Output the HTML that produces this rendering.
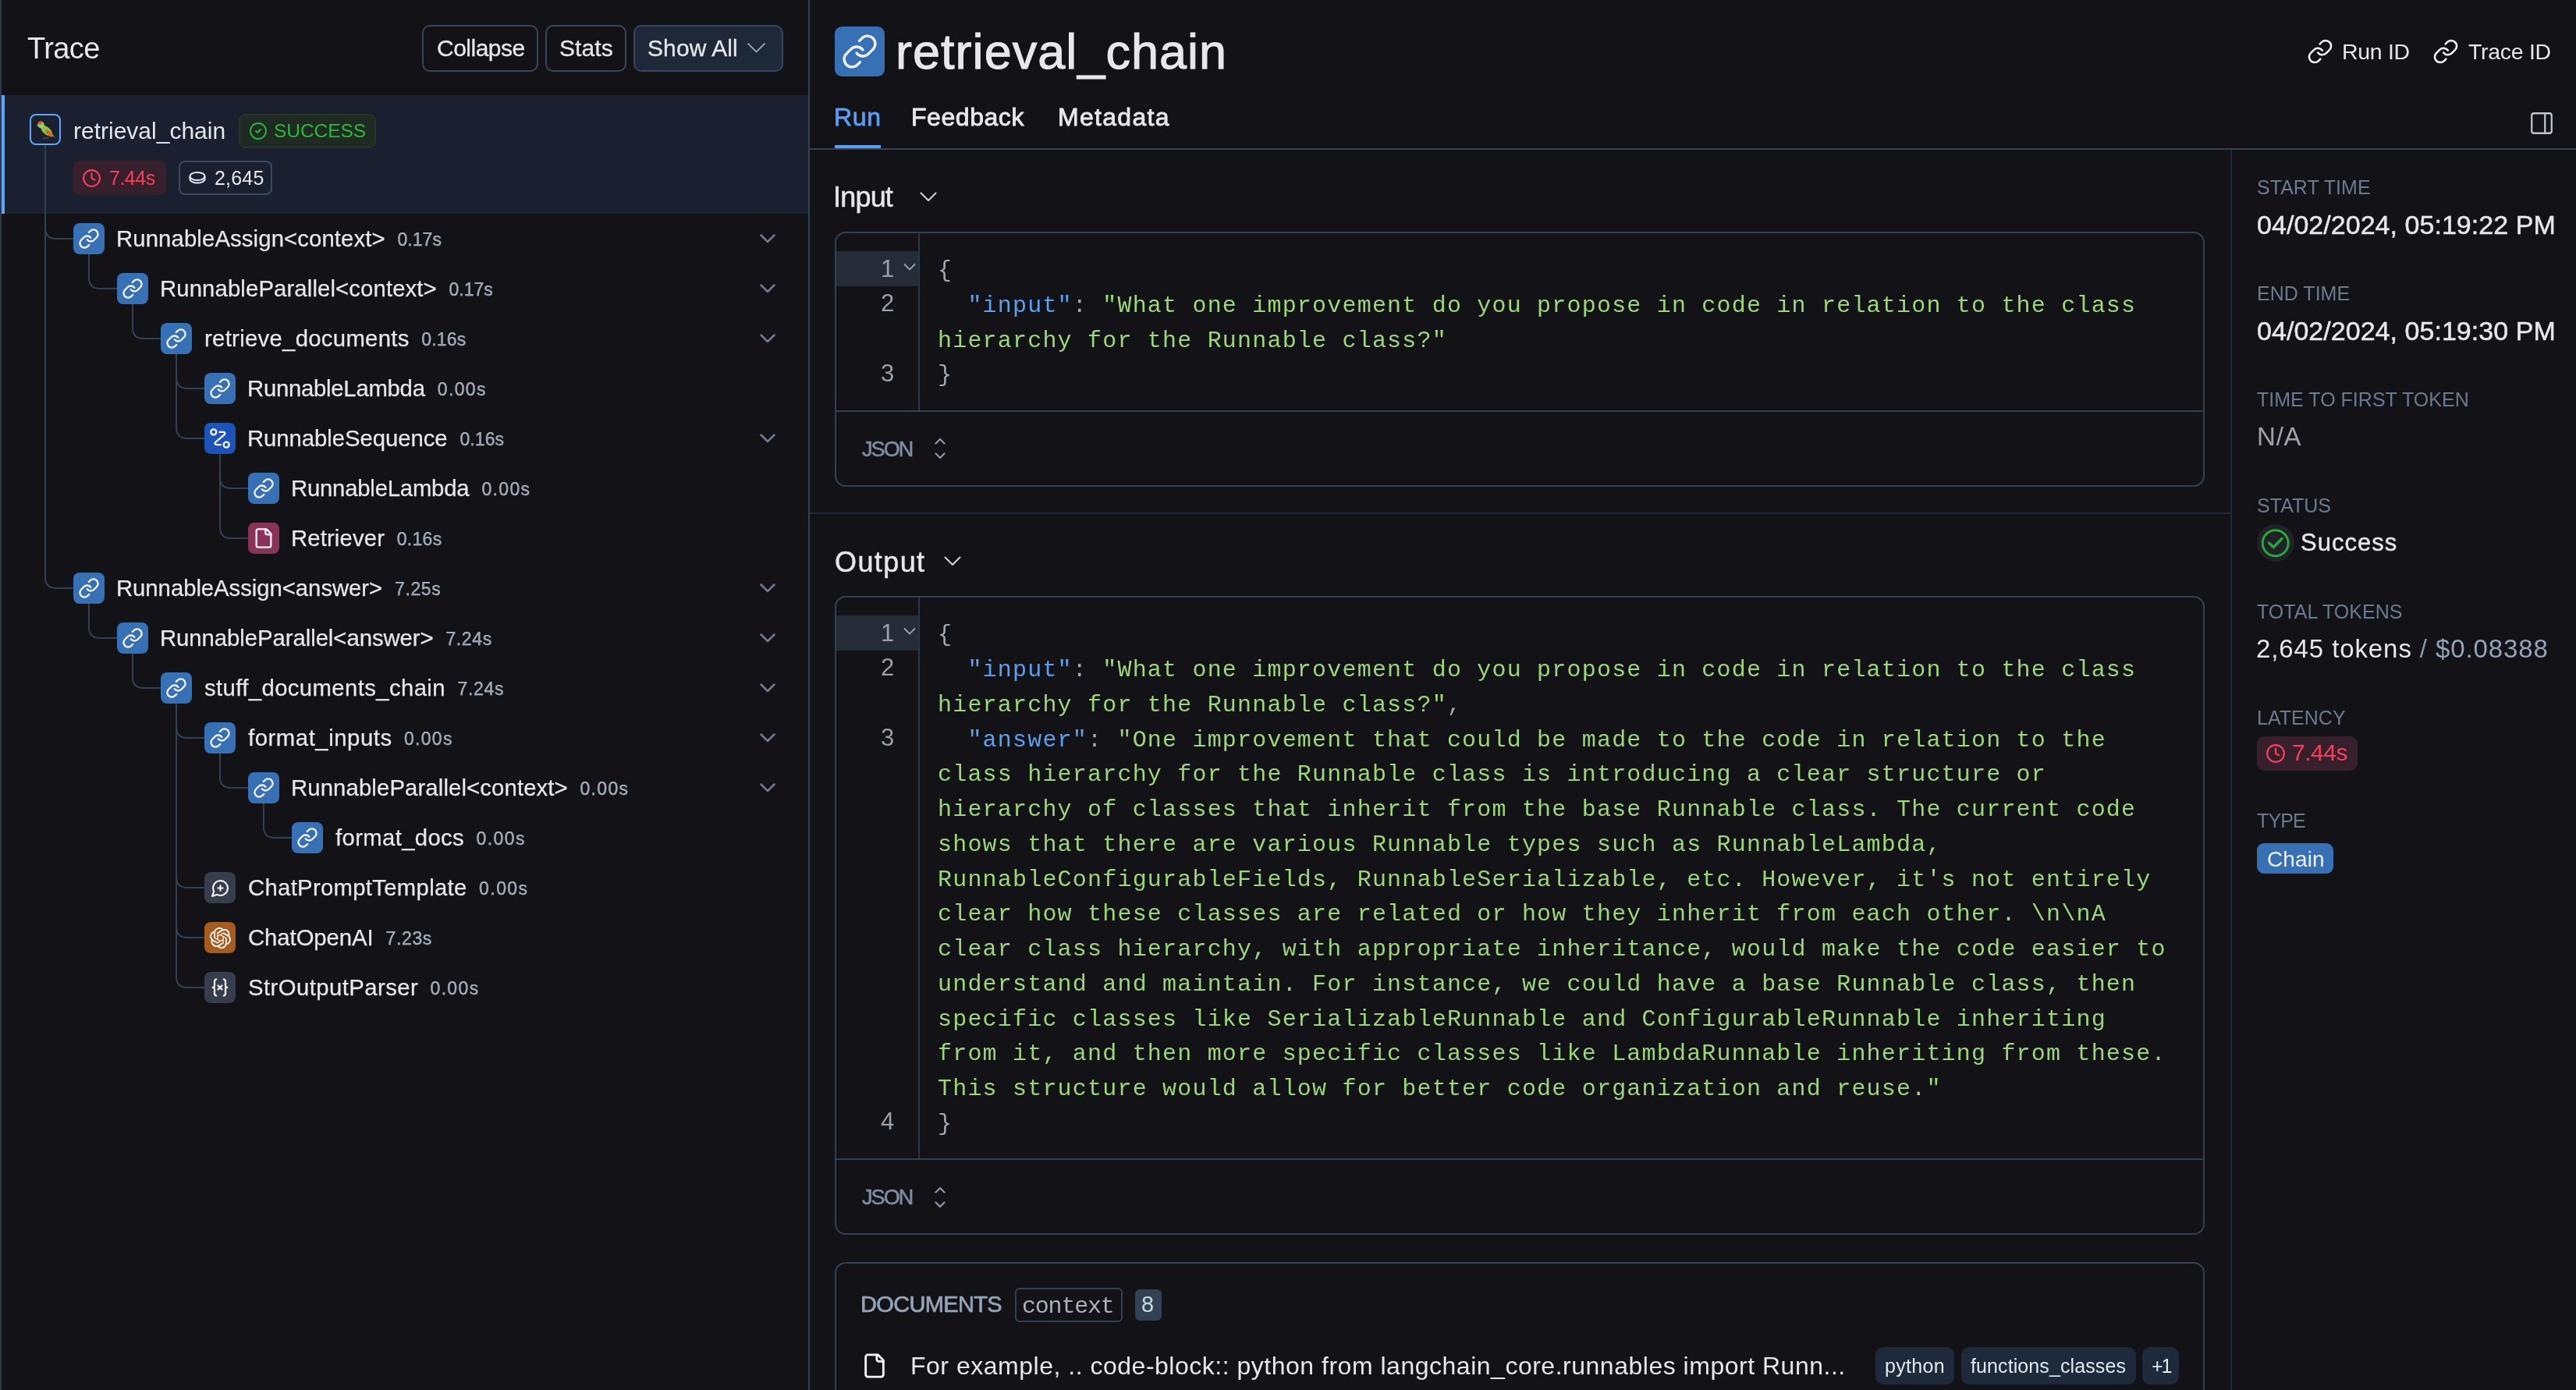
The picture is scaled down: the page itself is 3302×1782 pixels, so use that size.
<!DOCTYPE html><html><head><meta charset="utf-8"><style>
html,body{margin:0;padding:0;}
body{width:3302px;height:1782px;background:#131317;position:relative;overflow:hidden;font-family:'Liberation Sans', sans-serif;}
.t{position:absolute;white-space:pre;will-change:transform;}
.b{position:absolute;}
</style></head><body>
<div class="b" style="left:0px;top:0px;width:2px;height:1782px;background:#2e3a4a;border-radius:0px;box-sizing:border-box;"></div>
<div class="b" style="left:1036px;top:0px;width:2px;height:1782px;background:#334155;border-radius:0px;box-sizing:border-box;"></div>
<div class="t" style="left:35.0px;top:42.7px;font-size:38px;line-height:38px;color:#e6e6eb;font-weight:400;font-family:'Liberation Sans', sans-serif;letter-spacing:-0.6px;">Trace</div>
<div class="b" style="left:541px;top:32px;width:149px;height:60px;background:#131317;border:2px solid #37465c;border-radius:10px;box-sizing:border-box;"></div>
<div class="b" style="left:699px;top:32px;width:104px;height:60px;background:#131317;border:2px solid #37465c;border-radius:10px;box-sizing:border-box;"></div>
<div class="b" style="left:812px;top:32px;width:192px;height:60px;background:#1e2838;border:2px solid #37465c;border-radius:10px;box-sizing:border-box;"></div>
<div class="b" style="left:0px;top:0px;width:0px;height:0px;background:transparent;border-radius:0px;box-sizing:border-box;"></div>
<div class="t" style="left:560.0px;top:47.0px;font-size:30px;line-height:30px;color:#e6e6eb;font-weight:400;font-family:'Liberation Sans', sans-serif;letter-spacing:-0.5px;-webkit-text-stroke:0.3px #e6e6eb;">Collapse</div>
<div class="t" style="left:717.0px;top:47.0px;font-size:30px;line-height:30px;color:#e6e6eb;font-weight:400;font-family:'Liberation Sans', sans-serif;letter-spacing:0.1px;-webkit-text-stroke:0.3px #e6e6eb;">Stats</div>
<div class="t" style="left:830.0px;top:47.0px;font-size:30px;line-height:30px;color:#e6e6eb;font-weight:400;font-family:'Liberation Sans', sans-serif;letter-spacing:0.1px;-webkit-text-stroke:0.3px #e6e6eb;">Show All</div>
<svg class="b" style="left:957px;top:54px;" width="26" height="16" viewBox="0 0 26 16" fill="none" stroke="#a8b8cc" stroke-width="1.7" stroke-linecap="round" stroke-linejoin="round"><path d="M2 2L12.5 12.5L23 2"/></svg>
<div class="b" style="left:2px;top:122px;width:1034px;height:152px;background:#1b2030;border-radius:0px;box-sizing:border-box;"></div>
<div class="b" style="left:2px;top:122px;width:4px;height:152px;background:#60a5fa;border-radius:0px;box-sizing:border-box;"></div>
<svg class="b" style="left:0;top:0" width="1036" height="1782" fill="none" stroke="#334155" stroke-width="2"><path d="M58 186 V292 Q58 306 72 306 H94"/><path d="M114 326 V356 Q114 370 128 370 H150"/><path d="M170 390 V420 Q170 434 184 434 H206"/><path d="M226 454 V484 Q226 498 240 498 H262"/><path d="M226 454 V548 Q226 562 240 562 H262"/><path d="M282 582 V612 Q282 626 296 626 H318"/><path d="M282 582 V676 Q282 690 296 690 H318"/><path d="M58 186 V740 Q58 754 72 754 H94"/><path d="M114 774 V804 Q114 818 128 818 H150"/><path d="M170 838 V868 Q170 882 184 882 H206"/><path d="M226 902 V932 Q226 946 240 946 H262"/><path d="M282 966 V996 Q282 1010 296 1010 H318"/><path d="M338 1030 V1060 Q338 1074 352 1074 H374"/><path d="M226 902 V1124 Q226 1138 240 1138 H262"/><path d="M226 902 V1188 Q226 1202 240 1202 H262"/><path d="M226 902 V1252 Q226 1266 240 1266 H262"/></svg>
<div class="b" style="left:94px;top:286px;width:40px;height:40px;background:#3770b4;border-radius:8px;box-sizing:border-box;"></div>
<svg class="b" style="left:100px;top:292px;" width="28" height="28" viewBox="0 0 24 24" fill="none" stroke="#f5f5f7" stroke-width="2" stroke-linecap="round" stroke-linejoin="round"><path d="M10 13a5 5 0 0 0 7.54.54l3-3a5 5 0 0 0-7.07-7.07l-1.72 1.71"/><path d="M14 11a5 5 0 0 0-7.54-.54l-3 3a5 5 0 0 0 7.07 7.07l1.71-1.71"/></svg>
<div class="t" style="left:148.5px;top:291.1px;font-size:29.3px;line-height:29.3px;color:#e6e6eb;font-weight:400;font-family:'Liberation Sans', sans-serif;letter-spacing:0.12px;-webkit-text-stroke:0.25px #e6e6eb;">RunnableAssign&lt;context&gt;<span style="font-size:23px;color:#94a3b8;letter-spacing:0.05px;margin-left:15.68px;position:relative;top:-1px">0.17s</span></div>
<svg class="b" style="left:972px;top:298px;" width="24" height="16" viewBox="0 0 24 16" fill="none" stroke="#6e7d96" stroke-width="2.5" stroke-linecap="round" stroke-linejoin="round"><path d="M3.5 3.5L12 12L20.5 3.5"/></svg>
<div class="b" style="left:150px;top:350px;width:40px;height:40px;background:#3770b4;border-radius:8px;box-sizing:border-box;"></div>
<svg class="b" style="left:156px;top:356px;" width="28" height="28" viewBox="0 0 24 24" fill="none" stroke="#f5f5f7" stroke-width="2" stroke-linecap="round" stroke-linejoin="round"><path d="M10 13a5 5 0 0 0 7.54.54l3-3a5 5 0 0 0-7.07-7.07l-1.72 1.71"/><path d="M14 11a5 5 0 0 0-7.54-.54l-3 3a5 5 0 0 0 7.07 7.07l1.71-1.71"/></svg>
<div class="t" style="left:204.5px;top:355.1px;font-size:29.3px;line-height:29.3px;color:#e6e6eb;font-weight:400;font-family:'Liberation Sans', sans-serif;letter-spacing:0.12px;-webkit-text-stroke:0.25px #e6e6eb;">RunnableParallel&lt;context&gt;<span style="font-size:23px;color:#94a3b8;letter-spacing:0.02px;margin-left:15.68px;position:relative;top:-1px">0.17s</span></div>
<svg class="b" style="left:972px;top:362px;" width="24" height="16" viewBox="0 0 24 16" fill="none" stroke="#6e7d96" stroke-width="2.5" stroke-linecap="round" stroke-linejoin="round"><path d="M3.5 3.5L12 12L20.5 3.5"/></svg>
<div class="b" style="left:206px;top:414px;width:40px;height:40px;background:#3770b4;border-radius:8px;box-sizing:border-box;"></div>
<svg class="b" style="left:212px;top:420px;" width="28" height="28" viewBox="0 0 24 24" fill="none" stroke="#f5f5f7" stroke-width="2" stroke-linecap="round" stroke-linejoin="round"><path d="M10 13a5 5 0 0 0 7.54.54l3-3a5 5 0 0 0-7.07-7.07l-1.72 1.71"/><path d="M14 11a5 5 0 0 0-7.54-.54l-3 3a5 5 0 0 0 7.07 7.07l1.71-1.71"/></svg>
<div class="t" style="left:262.0px;top:419.1px;font-size:29.3px;line-height:29.3px;color:#e6e6eb;font-weight:400;font-family:'Liberation Sans', sans-serif;letter-spacing:0.3px;-webkit-text-stroke:0.25px #e6e6eb;">retrieve_documents<span style="font-size:23px;color:#94a3b8;letter-spacing:0.17px;margin-left:15.50px;position:relative;top:-1px">0.16s</span></div>
<svg class="b" style="left:972px;top:426px;" width="24" height="16" viewBox="0 0 24 16" fill="none" stroke="#6e7d96" stroke-width="2.5" stroke-linecap="round" stroke-linejoin="round"><path d="M3.5 3.5L12 12L20.5 3.5"/></svg>
<div class="b" style="left:262px;top:478px;width:40px;height:40px;background:#3770b4;border-radius:8px;box-sizing:border-box;"></div>
<svg class="b" style="left:268px;top:484px;" width="28" height="28" viewBox="0 0 24 24" fill="none" stroke="#f5f5f7" stroke-width="2" stroke-linecap="round" stroke-linejoin="round"><path d="M10 13a5 5 0 0 0 7.54.54l3-3a5 5 0 0 0-7.07-7.07l-1.72 1.71"/><path d="M14 11a5 5 0 0 0-7.54-.54l-3 3a5 5 0 0 0 7.07 7.07l1.71-1.71"/></svg>
<div class="t" style="left:316.5px;top:483.1px;font-size:29.3px;line-height:29.3px;color:#e6e6eb;font-weight:400;font-family:'Liberation Sans', sans-serif;letter-spacing:-0.26px;-webkit-text-stroke:0.25px #e6e6eb;">RunnableLambda<span style="font-size:23px;color:#94a3b8;letter-spacing:1.37px;margin-left:16.06px;position:relative;top:-1px">0.00s</span></div>
<div class="b" style="left:262px;top:542px;width:40px;height:40px;background:#1e53b8;border-radius:8px;box-sizing:border-box;"></div>
<svg class="b" style="left:268px;top:548px;" width="28" height="28" viewBox="0 0 24 24" fill="none" stroke="#f5f5f7" stroke-width="2" stroke-linecap="round" stroke-linejoin="round"><circle cx="5" cy="5" r="3"/><circle cx="19" cy="19" r="3"/><path d="M11.5 5h4.3c1.6 0 2.3 1.9 1.1 2.9L7.1 16.1c-1.2 1-.5 2.9 1.1 2.9h4.3"/></svg>
<div class="t" style="left:316.5px;top:547.1px;font-size:29.3px;line-height:29.3px;color:#e6e6eb;font-weight:400;font-family:'Liberation Sans', sans-serif;letter-spacing:-0.05px;-webkit-text-stroke:0.25px #e6e6eb;">RunnableSequence<span style="font-size:23px;color:#94a3b8;letter-spacing:0.10px;margin-left:15.85px;position:relative;top:-1px">0.16s</span></div>
<svg class="b" style="left:972px;top:554px;" width="24" height="16" viewBox="0 0 24 16" fill="none" stroke="#6e7d96" stroke-width="2.5" stroke-linecap="round" stroke-linejoin="round"><path d="M3.5 3.5L12 12L20.5 3.5"/></svg>
<div class="b" style="left:318px;top:606px;width:40px;height:40px;background:#3770b4;border-radius:8px;box-sizing:border-box;"></div>
<svg class="b" style="left:324px;top:612px;" width="28" height="28" viewBox="0 0 24 24" fill="none" stroke="#f5f5f7" stroke-width="2" stroke-linecap="round" stroke-linejoin="round"><path d="M10 13a5 5 0 0 0 7.54.54l3-3a5 5 0 0 0-7.07-7.07l-1.72 1.71"/><path d="M14 11a5 5 0 0 0-7.54-.54l-3 3a5 5 0 0 0 7.07 7.07l1.71-1.71"/></svg>
<div class="t" style="left:372.5px;top:611.1px;font-size:29.3px;line-height:29.3px;color:#e6e6eb;font-weight:400;font-family:'Liberation Sans', sans-serif;letter-spacing:-0.21px;-webkit-text-stroke:0.25px #e6e6eb;">RunnableLambda<span style="font-size:23px;color:#94a3b8;letter-spacing:1.35px;margin-left:16.01px;position:relative;top:-1px">0.00s</span></div>
<div class="b" style="left:318px;top:670px;width:40px;height:40px;background:#89335b;border-radius:8px;box-sizing:border-box;"></div>
<svg class="b" style="left:324px;top:676px;" width="28" height="28" viewBox="0 0 24 24" fill="none" stroke="#f5f5f7" stroke-width="2" stroke-linecap="round" stroke-linejoin="round"><path d="M15 2H6a2 2 0 0 0-2 2v16a2 2 0 0 0 2 2h12a2 2 0 0 0 2-2V7Z"/><path d="M14 2v4a2 2 0 0 0 2 2h4"/></svg>
<div class="t" style="left:372.5px;top:675.1px;font-size:29.3px;line-height:29.3px;color:#e6e6eb;font-weight:400;font-family:'Liberation Sans', sans-serif;letter-spacing:0.13px;-webkit-text-stroke:0.25px #e6e6eb;">Retriever<span style="font-size:23px;color:#94a3b8;letter-spacing:0.30px;margin-left:15.68px;position:relative;top:-1px">0.16s</span></div>
<div class="b" style="left:94px;top:734px;width:40px;height:40px;background:#3770b4;border-radius:8px;box-sizing:border-box;"></div>
<svg class="b" style="left:100px;top:740px;" width="28" height="28" viewBox="0 0 24 24" fill="none" stroke="#f5f5f7" stroke-width="2" stroke-linecap="round" stroke-linejoin="round"><path d="M10 13a5 5 0 0 0 7.54.54l3-3a5 5 0 0 0-7.07-7.07l-1.72 1.71"/><path d="M14 11a5 5 0 0 0-7.54-.54l-3 3a5 5 0 0 0 7.07 7.07l1.71-1.71"/></svg>
<div class="t" style="left:148.5px;top:739.1px;font-size:29.3px;line-height:29.3px;color:#e6e6eb;font-weight:400;font-family:'Liberation Sans', sans-serif;letter-spacing:-0.04px;-webkit-text-stroke:0.25px #e6e6eb;">RunnableAssign&lt;answer&gt;<span style="font-size:23px;color:#94a3b8;letter-spacing:0.62px;margin-left:15.84px;position:relative;top:-1px">7.25s</span></div>
<svg class="b" style="left:972px;top:746px;" width="24" height="16" viewBox="0 0 24 16" fill="none" stroke="#6e7d96" stroke-width="2.5" stroke-linecap="round" stroke-linejoin="round"><path d="M3.5 3.5L12 12L20.5 3.5"/></svg>
<div class="b" style="left:150px;top:798px;width:40px;height:40px;background:#3770b4;border-radius:8px;box-sizing:border-box;"></div>
<svg class="b" style="left:156px;top:804px;" width="28" height="28" viewBox="0 0 24 24" fill="none" stroke="#f5f5f7" stroke-width="2" stroke-linecap="round" stroke-linejoin="round"><path d="M10 13a5 5 0 0 0 7.54.54l3-3a5 5 0 0 0-7.07-7.07l-1.72 1.71"/><path d="M14 11a5 5 0 0 0-7.54-.54l-3 3a5 5 0 0 0 7.07 7.07l1.71-1.71"/></svg>
<div class="t" style="left:204.5px;top:803.1px;font-size:29.3px;line-height:29.3px;color:#e6e6eb;font-weight:400;font-family:'Liberation Sans', sans-serif;letter-spacing:-0.05px;-webkit-text-stroke:0.25px #e6e6eb;">RunnableParallel&lt;answer&gt;<span style="font-size:23px;color:#94a3b8;letter-spacing:0.62px;margin-left:15.85px;position:relative;top:-1px">7.24s</span></div>
<svg class="b" style="left:972px;top:810px;" width="24" height="16" viewBox="0 0 24 16" fill="none" stroke="#6e7d96" stroke-width="2.5" stroke-linecap="round" stroke-linejoin="round"><path d="M3.5 3.5L12 12L20.5 3.5"/></svg>
<div class="b" style="left:206px;top:862px;width:40px;height:40px;background:#3770b4;border-radius:8px;box-sizing:border-box;"></div>
<svg class="b" style="left:212px;top:868px;" width="28" height="28" viewBox="0 0 24 24" fill="none" stroke="#f5f5f7" stroke-width="2" stroke-linecap="round" stroke-linejoin="round"><path d="M10 13a5 5 0 0 0 7.54.54l3-3a5 5 0 0 0-7.07-7.07l-1.72 1.71"/><path d="M14 11a5 5 0 0 0-7.54-.54l-3 3a5 5 0 0 0 7.07 7.07l1.71-1.71"/></svg>
<div class="t" style="left:262.0px;top:867.1px;font-size:29.3px;line-height:29.3px;color:#e6e6eb;font-weight:400;font-family:'Liberation Sans', sans-serif;letter-spacing:0.39px;-webkit-text-stroke:0.25px #e6e6eb;">stuff_documents_chain<span style="font-size:23px;color:#94a3b8;letter-spacing:0.73px;margin-left:15.41px;position:relative;top:-1px">7.24s</span></div>
<svg class="b" style="left:972px;top:874px;" width="24" height="16" viewBox="0 0 24 16" fill="none" stroke="#6e7d96" stroke-width="2.5" stroke-linecap="round" stroke-linejoin="round"><path d="M3.5 3.5L12 12L20.5 3.5"/></svg>
<div class="b" style="left:262px;top:926px;width:40px;height:40px;background:#3770b4;border-radius:8px;box-sizing:border-box;"></div>
<svg class="b" style="left:268px;top:932px;" width="28" height="28" viewBox="0 0 24 24" fill="none" stroke="#f5f5f7" stroke-width="2" stroke-linecap="round" stroke-linejoin="round"><path d="M10 13a5 5 0 0 0 7.54.54l3-3a5 5 0 0 0-7.07-7.07l-1.72 1.71"/><path d="M14 11a5 5 0 0 0-7.54-.54l-3 3a5 5 0 0 0 7.07 7.07l1.71-1.71"/></svg>
<div class="t" style="left:318.0px;top:931.1px;font-size:29.3px;line-height:29.3px;color:#e6e6eb;font-weight:400;font-family:'Liberation Sans', sans-serif;letter-spacing:0.55px;-webkit-text-stroke:0.25px #e6e6eb;">format_inputs<span style="font-size:23px;color:#94a3b8;letter-spacing:1.33px;margin-left:15.25px;position:relative;top:-1px">0.00s</span></div>
<svg class="b" style="left:972px;top:938px;" width="24" height="16" viewBox="0 0 24 16" fill="none" stroke="#6e7d96" stroke-width="2.5" stroke-linecap="round" stroke-linejoin="round"><path d="M3.5 3.5L12 12L20.5 3.5"/></svg>
<div class="b" style="left:318px;top:990px;width:40px;height:40px;background:#3770b4;border-radius:8px;box-sizing:border-box;"></div>
<svg class="b" style="left:324px;top:996px;" width="28" height="28" viewBox="0 0 24 24" fill="none" stroke="#f5f5f7" stroke-width="2" stroke-linecap="round" stroke-linejoin="round"><path d="M10 13a5 5 0 0 0 7.54.54l3-3a5 5 0 0 0-7.07-7.07l-1.72 1.71"/><path d="M14 11a5 5 0 0 0-7.54-.54l-3 3a5 5 0 0 0 7.07 7.07l1.71-1.71"/></svg>
<div class="t" style="left:372.5px;top:995.1px;font-size:29.3px;line-height:29.3px;color:#e6e6eb;font-weight:400;font-family:'Liberation Sans', sans-serif;letter-spacing:0.12px;-webkit-text-stroke:0.25px #e6e6eb;">RunnableParallel&lt;context&gt;<span style="font-size:23px;color:#94a3b8;letter-spacing:1.33px;margin-left:15.68px;position:relative;top:-1px">0.00s</span></div>
<svg class="b" style="left:972px;top:1002px;" width="24" height="16" viewBox="0 0 24 16" fill="none" stroke="#6e7d96" stroke-width="2.5" stroke-linecap="round" stroke-linejoin="round"><path d="M3.5 3.5L12 12L20.5 3.5"/></svg>
<div class="b" style="left:374px;top:1054px;width:40px;height:40px;background:#3770b4;border-radius:8px;box-sizing:border-box;"></div>
<svg class="b" style="left:380px;top:1060px;" width="28" height="28" viewBox="0 0 24 24" fill="none" stroke="#f5f5f7" stroke-width="2" stroke-linecap="round" stroke-linejoin="round"><path d="M10 13a5 5 0 0 0 7.54.54l3-3a5 5 0 0 0-7.07-7.07l-1.72 1.71"/><path d="M14 11a5 5 0 0 0-7.54-.54l-3 3a5 5 0 0 0 7.07 7.07l1.71-1.71"/></svg>
<div class="t" style="left:430.0px;top:1059.1px;font-size:29.3px;line-height:29.3px;color:#e6e6eb;font-weight:400;font-family:'Liberation Sans', sans-serif;letter-spacing:0.35px;-webkit-text-stroke:0.25px #e6e6eb;">format_docs<span style="font-size:23px;color:#94a3b8;letter-spacing:1.45px;margin-left:15.45px;position:relative;top:-1px">0.00s</span></div>
<div class="b" style="left:262px;top:1118px;width:40px;height:40px;background:#373d4c;border-radius:8px;box-sizing:border-box;"></div>
<svg class="b" style="left:269.5px;top:1125.5px;" width="25" height="25" viewBox="0 0 24 24" fill="none" stroke="#f5f5f7" stroke-width="2" stroke-linecap="round" stroke-linejoin="round"><path d="M7.9 20A9 9 0 1 0 4 16.1L2 22Z"/><path d="M9 12h6"/><path d="M12 9v6"/></svg>
<div class="t" style="left:318.0px;top:1123.1px;font-size:29.3px;line-height:29.3px;color:#e6e6eb;font-weight:400;font-family:'Liberation Sans', sans-serif;letter-spacing:0.3px;-webkit-text-stroke:0.25px #e6e6eb;">ChatPromptTemplate<span style="font-size:23px;color:#94a3b8;letter-spacing:1.43px;margin-left:15.50px;position:relative;top:-1px">0.00s</span></div>
<div class="b" style="left:262px;top:1182px;width:40px;height:40px;background:#a65c21;border-radius:8px;box-sizing:border-box;"></div>
<svg class="b" style="left:268.5px;top:1188.5px;" width="27" height="27" viewBox="0 0 24 24" fill="none" stroke="none" stroke-width="2" stroke-linecap="round" stroke-linejoin="round"><path stroke="none" fill="#fff" d="M22.2819 9.8211a5.9847 5.9847 0 0 0-.5157-4.9108 6.0462 6.0462 0 0 0-6.5098-2.9A6.0651 6.0651 0 0 0 4.9807 4.1818a5.9847 5.9847 0 0 0-3.9977 2.9 6.0462 6.0462 0 0 0 .7427 7.0966 5.98 5.98 0 0 0 .511 4.9107 6.051 6.051 0 0 0 6.5146 2.9001A5.9847 5.9847 0 0 0 13.2599 24a6.0557 6.0557 0 0 0 5.7718-4.2058 5.9894 5.9894 0 0 0 3.9977-2.9001 6.0557 6.0557 0 0 0-.7475-7.0729zm-9.022 12.6081a4.4755 4.4755 0 0 1-2.8764-1.0408l.1419-.0804 4.7783-2.7582a.7948.7948 0 0 0 .3927-.6813v-6.7369l2.02 1.1686a.071.071 0 0 1 .038.052v5.5826a4.504 4.504 0 0 1-4.4945 4.4944zm-9.6607-4.1254a4.4708 4.4708 0 0 1-.5346-3.0137l.142.0852 4.783 2.7582a.7712.7712 0 0 0 .7806 0l5.8428-3.3685v2.3324a.0804.0804 0 0 1-.0332.0615L9.74 19.9502a4.4992 4.4992 0 0 1-6.1408-1.6464zM2.3408 7.8956a4.485 4.485 0 0 1 2.3655-1.9728V11.6a.7664.7664 0 0 0 .3879.6765l5.8144 3.3543-2.0201 1.1685a.0757.0757 0 0 1-.071 0l-4.8303-2.7865A4.504 4.504 0 0 1 2.3408 7.872zm16.5963 3.8558L13.1038 8.364 15.1192 7.2a.0757.0757 0 0 1 .071 0l4.8303 2.7913a4.4944 4.4944 0 0 1-.6765 8.1042v-5.6772a.79.79 0 0 0-.407-.667zm2.0107-3.0231l-.142-.0852-4.7735-2.7818a.7759.7759 0 0 0-.7854 0L9.409 9.2297V6.8974a.0662.0662 0 0 1 .0284-.0615l4.8303-2.7866a4.4992 4.4992 0 0 1 6.6802 4.66zM8.3065 12.863l-2.02-1.1638a.0804.0804 0 0 1-.038-.0567V6.0742a4.4992 4.4992 0 0 1 7.3757-3.4537l-.142.0805L8.704 5.459a.7948.7948 0 0 0-.3927.6813zm1.0976-2.3654l2.602-1.4998 2.6069 1.4998v2.9994l-2.5974 1.4997-2.6067-1.4997Z"/></svg>
<div class="t" style="left:318.0px;top:1187.1px;font-size:29.3px;line-height:29.3px;color:#e6e6eb;font-weight:400;font-family:'Liberation Sans', sans-serif;letter-spacing:-0.06px;-webkit-text-stroke:0.25px #e6e6eb;">ChatOpenAI<span style="font-size:23px;color:#94a3b8;letter-spacing:0.65px;margin-left:15.86px;position:relative;top:-1px">7.23s</span></div>
<div class="b" style="left:262px;top:1246px;width:40px;height:40px;background:#373d4c;border-radius:8px;box-sizing:border-box;"></div>
<svg class="b" style="left:268px;top:1252px;" width="28" height="28" viewBox="0 0 24 24" fill="none" stroke="#f5f5f7" stroke-width="1.9" stroke-linecap="round" stroke-linejoin="round"><path d="M8 3C6.3 3 6 4.2 6 5.5V9.8C6 11.2 5.2 12 4 12C5.2 12 6 12.8 6 14.2V18.5C6 19.8 6.3 21 8 21"/><path d="M16 3C17.7 3 18 4.2 18 5.5V9.8C18 11.2 18.8 12 20 12C18.8 12 18 12.8 18 14.2V18.5C18 19.8 17.7 21 16 21"/><path d="M9.8 9.8l4.4 4.4"/><path d="M14.2 9.8l-4.4 4.4"/></svg>
<div class="t" style="left:318.0px;top:1251.1px;font-size:29.3px;line-height:29.3px;color:#e6e6eb;font-weight:400;font-family:'Liberation Sans', sans-serif;letter-spacing:0.43px;-webkit-text-stroke:0.25px #e6e6eb;">StrOutputParser<span style="font-size:23px;color:#94a3b8;letter-spacing:1.35px;margin-left:15.37px;position:relative;top:-1px">0.00s</span></div>
<div class="b" style="left:38px;top:146px;width:40px;height:40px;background:#1b2030;border:2px solid #60a5fa;border-radius:8px;box-sizing:border-box;"></div>
<svg class="b" style="left:38px;top:146px" width="40" height="40" viewBox="0 0 40 40"><ellipse cx="21.5" cy="21.5" rx="9" ry="4.6" transform="rotate(42 21.5 21.5)" fill="#8cc152"/><circle cx="14.5" cy="14" r="4.2" fill="#9bd15a"/><ellipse cx="25" cy="25" rx="6" ry="2.6" transform="rotate(42 25 25)" fill="#d9661f"/><path d="M26 25L33 31L29 25.5Z" fill="#7fb347"/><circle cx="13.5" cy="11.5" r="2.2" fill="#e2552b"/><path d="M10.5 12.5L8.5 15L11 16Z" fill="#707070"/><path d="M17 31H24" stroke="#666" stroke-width="1"/></svg>
<div class="t" style="left:94.0px;top:152.9px;font-size:30px;line-height:30px;color:#e6e6eb;font-weight:400;font-family:'Liberation Sans', sans-serif;letter-spacing:0px;">retrieval_chain</div>
<div class="b" style="left:306px;top:146px;width:176px;height:44px;background:#1f2a22;border:2px solid #263526;border-radius:9px;box-sizing:border-box;"></div>
<svg class="b" style="left:319px;top:156px;" width="24" height="24" viewBox="0 0 24 24" fill="none" stroke="#2db83d" stroke-width="1.8" stroke-linecap="round" stroke-linejoin="round"><circle cx="12" cy="12" r="10"/><path d="m9 12 2 2 4-4"/></svg>
<div class="t" style="left:350.5px;top:156.0px;font-size:24.5px;line-height:24.5px;color:#2db83d;font-weight:400;font-family:'Liberation Sans', sans-serif;letter-spacing:-0.05px;">SUCCESS</div>
<div class="b" style="left:94px;top:206px;width:119px;height:44px;background:#37202b;border-radius:8px;box-sizing:border-box;"></div>
<svg class="b" style="left:105px;top:216px;" width="25" height="25" viewBox="0 0 24 24" fill="none" stroke="#f43f5e" stroke-width="2" stroke-linecap="round" stroke-linejoin="round"><circle cx="12" cy="12" r="10"/><path d="M12 6v6l4 2"/></svg>
<div class="t" style="left:140.0px;top:216.2px;font-size:25px;line-height:25px;color:#f43f5e;font-weight:400;font-family:'Liberation Sans', sans-serif;letter-spacing:-0.5px;">7.44s</div>
<div class="b" style="left:229px;top:206px;width:120px;height:44px;background:transparent;border:2px solid #3a4a60;border-radius:8px;box-sizing:border-box;"></div>
<svg class="b" style="left:241px;top:218px" width="24" height="20" viewBox="0 0 24 20" fill="none" stroke="#e2e8f0" stroke-width="2"><ellipse cx="12" cy="8" rx="9.5" ry="5"/><path d="M2.5 8v3.5c0 2.8 4.3 5 9.5 5s9.5-2.2 9.5-5V8"/></svg>
<div class="t" style="left:274.7px;top:216.2px;font-size:25px;line-height:25px;color:#e6e6eb;font-weight:400;font-family:'Liberation Sans', sans-serif;letter-spacing:0.2px;">2,645</div>
<div class="b" style="left:1070px;top:34px;width:64px;height:64px;background:#3770b4;border-radius:9px;box-sizing:border-box;"></div>
<svg class="b" style="left:1078px;top:42px;" width="48" height="48" viewBox="0 0 24 24" fill="none" stroke="#f0f0f3" stroke-width="1.7" stroke-linecap="round" stroke-linejoin="round"><path d="M10 13a5 5 0 0 0 7.54.54l3-3a5 5 0 0 0-7.07-7.07l-1.72 1.71"/><path d="M14 11a5 5 0 0 0-7.54-.54l-3 3a5 5 0 0 0 7.07 7.07l1.71-1.71"/></svg>
<div class="t" style="left:1148.0px;top:35.0px;font-size:63px;line-height:63px;color:#e6e6eb;font-weight:400;font-family:'Liberation Sans', sans-serif;letter-spacing:1.03px;-webkit-text-stroke:1px #ececf1;">retrieval_chain</div>
<svg class="b" style="left:2957px;top:49px;" width="34" height="34" viewBox="0 0 24 24" fill="none" stroke="#f5f5f7" stroke-width="1.8" stroke-linecap="round" stroke-linejoin="round"><path d="M10 13a5 5 0 0 0 7.54.54l3-3a5 5 0 0 0-7.07-7.07l-1.72 1.71"/><path d="M14 11a5 5 0 0 0-7.54-.54l-3 3a5 5 0 0 0 7.07 7.07l1.71-1.71"/></svg>
<div class="t" style="left:3001.7px;top:51.8px;font-size:28.5px;line-height:28.5px;color:#e6e6eb;font-weight:400;font-family:'Liberation Sans', sans-serif;letter-spacing:-0.3px;">Run ID</div>
<svg class="b" style="left:3118px;top:49px;" width="34" height="34" viewBox="0 0 24 24" fill="none" stroke="#f5f5f7" stroke-width="1.8" stroke-linecap="round" stroke-linejoin="round"><path d="M10 13a5 5 0 0 0 7.54.54l3-3a5 5 0 0 0-7.07-7.07l-1.72 1.71"/><path d="M14 11a5 5 0 0 0-7.54-.54l-3 3a5 5 0 0 0 7.07 7.07l1.71-1.71"/></svg>
<div class="t" style="left:3164.0px;top:51.8px;font-size:28.5px;line-height:28.5px;color:#e6e6eb;font-weight:400;font-family:'Liberation Sans', sans-serif;letter-spacing:-0.3px;">Trace ID</div>
<div class="t" style="left:1068.7px;top:133.8px;font-size:32px;line-height:32px;color:#5b9cf5;font-weight:400;font-family:'Liberation Sans', sans-serif;letter-spacing:0.7px;-webkit-text-stroke:0.8px #5b9cf5;">Run</div>
<div class="b" style="left:1070px;top:186px;width:59px;height:5px;background:#5b9cf5;border-radius:0px;box-sizing:border-box;"></div>
<div class="t" style="left:1168.4px;top:133.8px;font-size:32px;line-height:32px;color:#e6e6eb;font-weight:400;font-family:'Liberation Sans', sans-serif;letter-spacing:0.55px;-webkit-text-stroke:0.8px #ececf1;">Feedback</div>
<div class="t" style="left:1356.0px;top:133.8px;font-size:32px;line-height:32px;color:#e6e6eb;font-weight:400;font-family:'Liberation Sans', sans-serif;letter-spacing:1.29px;-webkit-text-stroke:0.8px #ececf1;">Metadata</div>
<svg class="b" style="left:3241px;top:141px;" width="34" height="34" viewBox="0 0 24 24" fill="none" stroke="#c0c4cc" stroke-width="1.6" stroke-linecap="round" stroke-linejoin="round"><rect x="3" y="3" width="18" height="18" rx="2"/><path d="M15 3v18"/></svg>
<div class="b" style="left:1038px;top:190px;width:2264px;height:2px;background:#334155;border-radius:0px;box-sizing:border-box;"></div>
<div class="b" style="left:2859px;top:192px;width:2px;height:1590px;background:#1e293b;border-radius:0px;box-sizing:border-box;"></div>
<div class="b" style="left:1038px;top:657px;width:1821px;height:2px;background:#1e293b;border-radius:0px;box-sizing:border-box;"></div>
<div class="t" style="left:1068.0px;top:235.0px;font-size:36px;line-height:36px;color:#e6e6eb;font-weight:400;font-family:'Liberation Sans', sans-serif;letter-spacing:-0.8px;-webkit-text-stroke:0.5px #e6e6eb;">Input</div>
<svg class="b" style="left:1177px;top:244px;" width="26" height="16" viewBox="0 0 26 16" fill="none" stroke="#d4d4d8" stroke-width="2" stroke-linecap="round" stroke-linejoin="round"><path d="M3.5 3.5L13 13L22.5 3.5"/></svg>
<div class="b" style="left:1070px;top:297px;width:1756px;height:327.0px;background:transparent;border:2px solid #334155;border-radius:14px;box-sizing:border-box;"></div>
<div class="b" style="left:1072px;top:322px;width:106px;height:44.75px;background:#262b38;border-radius:0px;box-sizing:border-box;"></div>
<div class="b" style="left:1177px;top:299px;width:2px;height:227.0px;background:#2b3647;border-radius:0px;box-sizing:border-box;"></div>
<div class="b" style="left:1072px;top:526.0px;width:1752px;height:2.0px;background:#334155;border-radius:0px;box-sizing:border-box;"></div>
<div class="t" style="left:1202.0px;top:332.2px;font-size:30px;line-height:30px;color:#9cd67a;font-weight:400;font-family:'Liberation Mono', monospace;letter-spacing:1.2px;"><span style="color:#a1a7b3">{</span></div>
<div class="t" style="left:1202.0px;top:376.9px;font-size:30px;line-height:30px;color:#9cd67a;font-weight:400;font-family:'Liberation Mono', monospace;letter-spacing:1.2px;">  <span style="color:#5c9ff0">"input"</span><span style="color:#a1a7b3">: </span>"What one improvement do you propose in code in relation to the class</div>
<div class="t" style="left:1202.0px;top:421.7px;font-size:30px;line-height:30px;color:#9cd67a;font-weight:400;font-family:'Liberation Mono', monospace;letter-spacing:1.2px;">hierarchy for the Runnable class?"</div>
<div class="t" style="left:1202.0px;top:466.4px;font-size:30px;line-height:30px;color:#9cd67a;font-weight:400;font-family:'Liberation Mono', monospace;letter-spacing:1.2px;"><span style="color:#a1a7b3">}</span></div>
<div class="t" style="left:1129.0px;top:328.6px;font-size:31px;line-height:31px;color:#9aa0aa;font-weight:400;font-family:'Liberation Sans', sans-serif;letter-spacing:0px;">1</div>
<div class="t" style="left:1129.0px;top:373.4px;font-size:31px;line-height:31px;color:#9aa0aa;font-weight:400;font-family:'Liberation Sans', sans-serif;letter-spacing:0px;">2</div>
<div class="t" style="left:1129.0px;top:462.9px;font-size:31px;line-height:31px;color:#9aa0aa;font-weight:400;font-family:'Liberation Sans', sans-serif;letter-spacing:0px;">3</div>
<svg class="b" style="left:1157px;top:337px;" width="18" height="12" viewBox="0 0 18 12" fill="none" stroke="#9aa0aa" stroke-width="1.8" stroke-linecap="round" stroke-linejoin="round"><path d="M2.5 2L9 8.5L15.5 2"/></svg>
<div class="t" style="left:1105.0px;top:562.5px;font-size:27px;line-height:27px;color:#7f8ca1;font-weight:400;font-family:'Liberation Sans', sans-serif;letter-spacing:-1.9px;-webkit-text-stroke:0.6px #7f8ca1;">JSON</div>
<svg class="b" style="left:1195px;top:558.4px;" width="20" height="34" viewBox="0 0 20 34" fill="none" stroke="#8b98ab" stroke-width="2.2" stroke-linecap="round" stroke-linejoin="round"><path d="M4.5 10.5L10 5L15.5 10.5"/><path d="M4.5 23.5L10 29L15.5 23.5"/></svg>
<div class="t" style="left:1070.0px;top:702.9px;font-size:36px;line-height:36px;color:#e6e6eb;font-weight:400;font-family:'Liberation Sans', sans-serif;letter-spacing:1.4px;-webkit-text-stroke:0.5px #e6e6eb;">Output</div>
<svg class="b" style="left:1208px;top:711px;" width="26" height="16" viewBox="0 0 26 16" fill="none" stroke="#d4d4d8" stroke-width="2" stroke-linecap="round" stroke-linejoin="round"><path d="M3.5 3.5L13 13L22.5 3.5"/></svg>
<div class="b" style="left:1070px;top:764px;width:1756px;height:819.25px;background:transparent;border:2px solid #334155;border-radius:14px;box-sizing:border-box;"></div>
<div class="b" style="left:1072px;top:789px;width:106px;height:44.75px;background:#262b38;border-radius:0px;box-sizing:border-box;"></div>
<div class="b" style="left:1177px;top:766px;width:2px;height:719.25px;background:#2b3647;border-radius:0px;box-sizing:border-box;"></div>
<div class="b" style="left:1072px;top:1485.25px;width:1752px;height:2.0px;background:#334155;border-radius:0px;box-sizing:border-box;"></div>
<div class="t" style="left:1202.0px;top:799.2px;font-size:30px;line-height:30px;color:#9cd67a;font-weight:400;font-family:'Liberation Mono', monospace;letter-spacing:1.2px;"><span style="color:#a1a7b3">{</span></div>
<div class="t" style="left:1202.0px;top:844.0px;font-size:30px;line-height:30px;color:#9cd67a;font-weight:400;font-family:'Liberation Mono', monospace;letter-spacing:1.2px;">  <span style="color:#5c9ff0">"input"</span><span style="color:#a1a7b3">: </span>"What one improvement do you propose in code in relation to the class</div>
<div class="t" style="left:1202.0px;top:888.7px;font-size:30px;line-height:30px;color:#9cd67a;font-weight:400;font-family:'Liberation Mono', monospace;letter-spacing:1.2px;">hierarchy for the Runnable class?"<span style="color:#a1a7b3">,</span></div>
<div class="t" style="left:1202.0px;top:933.5px;font-size:30px;line-height:30px;color:#9cd67a;font-weight:400;font-family:'Liberation Mono', monospace;letter-spacing:1.2px;">  <span style="color:#5c9ff0">"answer"</span><span style="color:#a1a7b3">: </span>"One improvement that could be made to the code in relation to the</div>
<div class="t" style="left:1202.0px;top:978.2px;font-size:30px;line-height:30px;color:#9cd67a;font-weight:400;font-family:'Liberation Mono', monospace;letter-spacing:1.2px;">class hierarchy for the Runnable class is introducing a clear structure or</div>
<div class="t" style="left:1202.0px;top:1023.0px;font-size:30px;line-height:30px;color:#9cd67a;font-weight:400;font-family:'Liberation Mono', monospace;letter-spacing:1.2px;">hierarchy of classes that inherit from the base Runnable class. The current code</div>
<div class="t" style="left:1202.0px;top:1067.7px;font-size:30px;line-height:30px;color:#9cd67a;font-weight:400;font-family:'Liberation Mono', monospace;letter-spacing:1.2px;">shows that there are various Runnable types such as RunnableLambda,</div>
<div class="t" style="left:1202.0px;top:1112.5px;font-size:30px;line-height:30px;color:#9cd67a;font-weight:400;font-family:'Liberation Mono', monospace;letter-spacing:1.2px;">RunnableConfigurableFields, RunnableSerializable, etc. However, it's not entirely</div>
<div class="t" style="left:1202.0px;top:1157.2px;font-size:30px;line-height:30px;color:#9cd67a;font-weight:400;font-family:'Liberation Mono', monospace;letter-spacing:1.2px;">clear how these classes are related or how they inherit from each other. \n\nA</div>
<div class="t" style="left:1202.0px;top:1202.0px;font-size:30px;line-height:30px;color:#9cd67a;font-weight:400;font-family:'Liberation Mono', monospace;letter-spacing:1.2px;">clear class hierarchy, with appropriate inheritance, would make the code easier to</div>
<div class="t" style="left:1202.0px;top:1246.7px;font-size:30px;line-height:30px;color:#9cd67a;font-weight:400;font-family:'Liberation Mono', monospace;letter-spacing:1.2px;">understand and maintain. For instance, we could have a base Runnable class, then</div>
<div class="t" style="left:1202.0px;top:1291.5px;font-size:30px;line-height:30px;color:#9cd67a;font-weight:400;font-family:'Liberation Mono', monospace;letter-spacing:1.2px;">specific classes like SerializableRunnable and ConfigurableRunnable inheriting</div>
<div class="t" style="left:1202.0px;top:1336.2px;font-size:30px;line-height:30px;color:#9cd67a;font-weight:400;font-family:'Liberation Mono', monospace;letter-spacing:1.2px;">from it, and then more specific classes like LambdaRunnable inheriting from these.</div>
<div class="t" style="left:1202.0px;top:1381.0px;font-size:30px;line-height:30px;color:#9cd67a;font-weight:400;font-family:'Liberation Mono', monospace;letter-spacing:1.2px;">This structure would allow for better code organization and reuse."</div>
<div class="t" style="left:1202.0px;top:1425.7px;font-size:30px;line-height:30px;color:#9cd67a;font-weight:400;font-family:'Liberation Mono', monospace;letter-spacing:1.2px;"><span style="color:#a1a7b3">}</span></div>
<div class="t" style="left:1129.0px;top:795.6px;font-size:31px;line-height:31px;color:#9aa0aa;font-weight:400;font-family:'Liberation Sans', sans-serif;letter-spacing:0px;">1</div>
<div class="t" style="left:1129.0px;top:840.4px;font-size:31px;line-height:31px;color:#9aa0aa;font-weight:400;font-family:'Liberation Sans', sans-serif;letter-spacing:0px;">2</div>
<div class="t" style="left:1129.0px;top:929.9px;font-size:31px;line-height:31px;color:#9aa0aa;font-weight:400;font-family:'Liberation Sans', sans-serif;letter-spacing:0px;">3</div>
<div class="t" style="left:1129.0px;top:1422.2px;font-size:31px;line-height:31px;color:#9aa0aa;font-weight:400;font-family:'Liberation Sans', sans-serif;letter-spacing:0px;">4</div>
<svg class="b" style="left:1157px;top:804px;" width="18" height="12" viewBox="0 0 18 12" fill="none" stroke="#9aa0aa" stroke-width="1.8" stroke-linecap="round" stroke-linejoin="round"><path d="M2.5 2L9 8.5L15.5 2"/></svg>
<div class="t" style="left:1105.0px;top:1521.8px;font-size:27px;line-height:27px;color:#7f8ca1;font-weight:400;font-family:'Liberation Sans', sans-serif;letter-spacing:-1.9px;-webkit-text-stroke:0.6px #7f8ca1;">JSON</div>
<svg class="b" style="left:1195px;top:1517.65px;" width="20" height="34" viewBox="0 0 20 34" fill="none" stroke="#8b98ab" stroke-width="2.2" stroke-linecap="round" stroke-linejoin="round"><path d="M4.5 10.5L10 5L15.5 10.5"/><path d="M4.5 23.5L10 29L15.5 23.5"/></svg>
<div class="b" style="left:1070px;top:1618px;width:1756px;height:282px;background:transparent;border:2px solid #334155;border-radius:14px;box-sizing:border-box;"></div>
<div class="t" style="left:1102.5px;top:1658.3px;font-size:29px;line-height:29px;color:#94a3b8;font-weight:400;font-family:'Liberation Sans', sans-serif;letter-spacing:-0.65px;-webkit-text-stroke:0.7px #94a3b8;">DOCUMENTS</div>
<div class="b" style="left:1301px;top:1651px;width:138px;height:44px;background:transparent;border:2px solid #334155;border-radius:6px;box-sizing:border-box;"></div>
<div class="t" style="left:1310.4px;top:1660.2px;font-size:30px;line-height:30px;color:#a8b0bc;font-weight:400;font-family:'Liberation Mono', monospace;letter-spacing:-1.2px;">context</div>
<div class="b" style="left:1455px;top:1653px;width:34px;height:40px;background:#334155;border-radius:6px;box-sizing:border-box;"></div>
<div class="t" style="left:1463.0px;top:1658.3px;font-size:29px;line-height:29px;color:#cbd5e1;font-weight:400;font-family:'Liberation Sans', sans-serif;letter-spacing:0px;">8</div>
<svg class="b" style="left:1104px;top:1734px;" width="34" height="34" viewBox="0 0 24 24" fill="none" stroke="#f5f5f7" stroke-width="2" stroke-linecap="round" stroke-linejoin="round"><path d="M15 2H6a2 2 0 0 0-2 2v16a2 2 0 0 0 2 2h12a2 2 0 0 0 2-2V7Z"/><path d="M14 2v4a2 2 0 0 0 2 2h4"/></svg>
<div class="t" style="left:1167.0px;top:1734.8px;font-size:32px;line-height:32px;color:#e6e6eb;font-weight:400;font-family:'Liberation Sans', sans-serif;letter-spacing:0.51px;">For example, .. code-block:: python from langchain_core.runnables import Runn...</div>
<div class="b" style="left:2404px;top:1727px;width:101px;height:48px;background:#1e293b;border-radius:10px;box-sizing:border-box;"></div>
<div class="t" style="left:2416.0px;top:1738.8px;font-size:25px;line-height:25px;color:#e2e8f0;font-weight:400;font-family:'Liberation Sans', sans-serif;letter-spacing:0.3px;">python</div>
<div class="b" style="left:2514px;top:1727px;width:224px;height:48px;background:#1e293b;border-radius:10px;box-sizing:border-box;"></div>
<div class="t" style="left:2526.0px;top:1738.8px;font-size:25px;line-height:25px;color:#e2e8f0;font-weight:400;font-family:'Liberation Sans', sans-serif;letter-spacing:0.1px;">functions_classes</div>
<div class="b" style="left:2746px;top:1727px;width:47px;height:48px;background:#1e293b;border-radius:10px;box-sizing:border-box;"></div>
<div class="t" style="left:2758.0px;top:1738.8px;font-size:25px;line-height:25px;color:#e2e8f0;font-weight:400;font-family:'Liberation Sans', sans-serif;letter-spacing:-2.2px;">+1</div>
<div class="t" style="left:2892.8px;top:227.9px;font-size:25px;line-height:25px;color:#6b7a90;font-weight:400;font-family:'Liberation Sans', sans-serif;letter-spacing:0.02px;">START TIME</div>
<div class="t" style="left:2892.8px;top:270.8px;font-size:34px;line-height:34px;color:#e6e6eb;font-weight:400;font-family:'Liberation Sans', sans-serif;letter-spacing:0.04px;-webkit-text-stroke:0.5px #e6e6eb;">04/02/2024, 05:19:22 PM</div>
<div class="t" style="left:2892.8px;top:364.1px;font-size:25px;line-height:25px;color:#6b7a90;font-weight:400;font-family:'Liberation Sans', sans-serif;letter-spacing:0.02px;">END TIME</div>
<div class="t" style="left:2892.8px;top:407.1px;font-size:34px;line-height:34px;color:#e6e6eb;font-weight:400;font-family:'Liberation Sans', sans-serif;letter-spacing:0.04px;-webkit-text-stroke:0.5px #e6e6eb;">04/02/2024, 05:19:30 PM</div>
<div class="t" style="left:2892.8px;top:500.0px;font-size:25px;line-height:25px;color:#6b7a90;font-weight:400;font-family:'Liberation Sans', sans-serif;letter-spacing:0.02px;">TIME TO FIRST TOKEN</div>
<div class="t" style="left:2892.6px;top:543.0px;font-size:33px;line-height:33px;color:#a1a1aa;font-weight:400;font-family:'Liberation Sans', sans-serif;letter-spacing:0.8px;">N/A</div>
<div class="t" style="left:2892.8px;top:636.1px;font-size:25px;line-height:25px;color:#6b7a90;font-weight:400;font-family:'Liberation Sans', sans-serif;letter-spacing:0.02px;">STATUS</div>
<div class="b" style="left:2893px;top:672px;width:48px;height:48px;background:#1f2226;border-radius:24px;box-sizing:border-box;"></div>
<svg class="b" style="left:2893px;top:672px" width="48" height="48" viewBox="0 0 48 48" fill="none" stroke="#2aa838" stroke-linecap="round" stroke-linejoin="round"><circle cx="23.7" cy="24.3" r="16.5" stroke-width="3"/><path d="M15.5 24L21.2 29.6L32 18.5" stroke-width="3.4"/></svg>
<div class="t" style="left:2949.0px;top:680.4px;font-size:31px;line-height:31px;color:#e6e6eb;font-weight:400;font-family:'Liberation Sans', sans-serif;letter-spacing:1.0px;-webkit-text-stroke:0.4px #e6e6eb;">Success</div>
<div class="t" style="left:2892.8px;top:771.8px;font-size:25px;line-height:25px;color:#6b7a90;font-weight:400;font-family:'Liberation Sans', sans-serif;letter-spacing:0.02px;">TOTAL TOKENS</div>
<div class="t" style="left:2892.0px;top:814.7px;font-size:33px;line-height:33px;color:#e6e6eb;font-weight:400;font-family:'Liberation Sans', sans-serif;letter-spacing:0.9px;">2,645 tokens <span style="color:#8a96a8">/</span> <span style="color:#94a3b8">$0.08388</span></div>
<div class="t" style="left:2892.8px;top:907.8px;font-size:25px;line-height:25px;color:#6b7a90;font-weight:400;font-family:'Liberation Sans', sans-serif;letter-spacing:0.02px;">LATENCY</div>
<div class="b" style="left:2893px;top:944px;width:129px;height:44px;background:#37202b;border-radius:9px;box-sizing:border-box;"></div>
<svg class="b" style="left:2904px;top:953px;" width="26" height="26" viewBox="0 0 24 24" fill="none" stroke="#f43f5e" stroke-width="2" stroke-linecap="round" stroke-linejoin="round"><circle cx="12" cy="12" r="10"/><path d="M12 6v6l4 2"/></svg>
<div class="t" style="left:2938.0px;top:950.2px;font-size:30px;line-height:30px;color:#f43f5e;font-weight:400;font-family:'Liberation Sans', sans-serif;letter-spacing:-0.5px;">7.44s</div>
<div class="t" style="left:2892.8px;top:1040.2px;font-size:25px;line-height:25px;color:#6b7a90;font-weight:400;font-family:'Liberation Sans', sans-serif;letter-spacing:-0.85px;">TYPE</div>
<div class="b" style="left:2893px;top:1081px;width:98px;height:39px;background:#3770b4;border-radius:9px;box-sizing:border-box;"></div>
<div class="t" style="left:2905.5px;top:1087.7px;font-size:28px;line-height:28px;color:#f0f0f3;font-weight:400;font-family:'Liberation Sans', sans-serif;letter-spacing:0.1px;">Chain</div>
</body></html>
